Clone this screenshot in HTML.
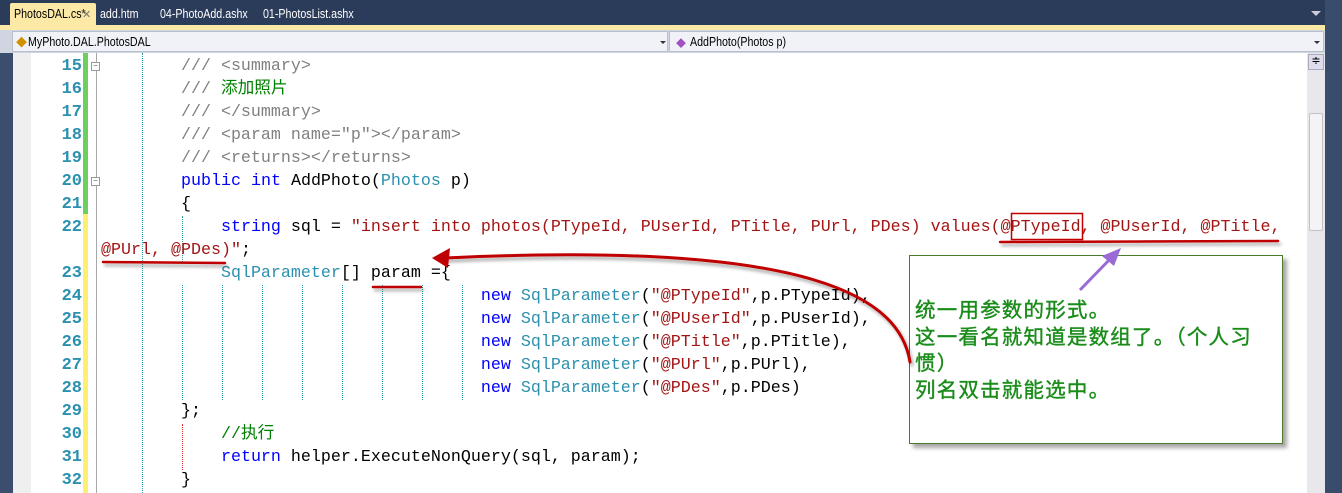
<!DOCTYPE html>
<html><head><meta charset="utf-8">
<style>
*{margin:0;padding:0;box-sizing:border-box}
body{width:1342px;height:493px;overflow:hidden;background:#fff;position:relative;font-family:"Liberation Sans","Noto Sans CJK SC",sans-serif}
.abs{position:absolute}
.tab{position:absolute;top:6px;font-size:13px;color:#fff;transform:scaleX(0.82);transform-origin:0 0;white-space:nowrap}
.nav{position:absolute;top:34px;font-size:13px;transform:scaleX(0.82);transform-origin:0 0;white-space:nowrap}
.code{position:absolute;left:101px;font-family:"Liberation Mono","Noto Sans CJK SC",monospace;font-size:16.67px;line-height:23px;height:23px;white-space:pre;color:#000}
.ln{position:absolute;left:31px;width:51px;text-align:right;font-family:"Liberation Mono",monospace;font-weight:bold;font-size:17px;line-height:23px;color:#2b91af}
.c{color:#808080}.g{color:#008000}.k{color:#0000ff}.t{color:#2b91af}.s{color:#a31515}
.dot{position:absolute;width:0;border-left:1px dotted #2a9a9a}
.note{position:absolute;left:915px;font-family:"WenQuanYi Zen Hei","Noto Sans CJK SC",sans-serif;font-size:20.5px;letter-spacing:1.2px;color:#1a8c1a;font-weight:normal;-webkit-text-stroke:0.4px #1a8c1a;line-height:26px;white-space:pre}
</style></head><body>
<div class="abs" style="left:0;top:0;width:1342px;height:30px;background:#2b3b5a"></div>
<div class="abs" style="left:10px;top:3px;width:86px;height:24px;background:#fce9a6;border-radius:2px 2px 0 0"></div>
<div class="abs" style="left:0;top:25px;width:1325px;height:5px;background:#fce9a6"></div>
<div class="tab" style="left:14px;color:#000">PhotosDAL.cs*</div>
<div class="abs" style="left:82px;top:8px;font-size:11px;color:#777">✕</div>
<div class="tab" style="left:100px">add.htm</div>
<div class="tab" style="left:160px">04-PhotoAdd.ashx</div>
<div class="tab" style="left:263px">01-PhotosList.ashx</div>
<div class="abs" style="left:1311px;top:11px;width:0;height:0;border-left:5px solid transparent;border-right:5px solid transparent;border-top:5px solid #ccd"></div>
<div class="abs" style="left:0;top:30px;width:13px;height:463px;background:#3c4e6e"></div>
<div class="abs" style="left:1325px;top:0;width:17px;height:493px;background:#3a4c6c"></div>
<div class="abs" style="left:0;top:30px;width:1325px;height:23px;background:#cfd6e2"></div>
<div class="abs" style="left:12px;top:31px;width:656px;height:21px;background:#f0f2f7;border:1px solid #b8c0cc"></div>
<div class="abs" style="left:669px;top:31px;width:655px;height:21px;background:#f0f2f7;border:1px solid #b8c0cc"></div>
<div class="abs" style="left:16px;top:34px;font-size:11px;color:#d09000">◆</div>
<div class="nav" style="left:28px">MyPhoto.DAL.PhotosDAL</div>
<div class="abs" style="left:660px;top:41px;border-left:3px solid transparent;border-right:3px solid transparent;border-top:3px solid #333"></div>
<div class="abs" style="left:676px;top:35px;font-size:10px;color:#a050c0">◆</div>
<div class="nav" style="left:690px">AddPhoto(Photos p)</div>
<div class="abs" style="left:1314px;top:41px;border-left:3px solid transparent;border-right:3px solid transparent;border-top:3px solid #333"></div>
<div class="abs" style="left:13px;top:53px;width:18px;height:440px;background:#efefef"></div>
<div class="abs" style="left:83px;top:53px;width:5px;height:161px;background:#6ccf5e"></div>
<div class="abs" style="left:83px;top:214px;width:5px;height:279px;background:#fef06e"></div>
<div class="abs" style="left:96px;top:53px;width:1px;height:440px;background:#a8a8a8"></div>
<div class="abs" style="left:91px;top:62px;width:9px;height:9px;border:1px solid #999;background:#fff;font-size:8px;line-height:6px;text-align:center;color:#555">−</div>
<div class="abs" style="left:91px;top:177px;width:9px;height:9px;border:1px solid #999;background:#fff;font-size:8px;line-height:6px;text-align:center;color:#555">−</div>
<div class="abs" style="left:1307px;top:53px;width:18px;height:440px;background:#e8e8ec"></div>
<div class="abs" style="left:1308px;top:54px;width:16px;height:16px;background:#dde;border:1px solid #aab;font-size:11px;text-align:center;line-height:13px">≑</div>
<div class="abs" style="left:1309px;top:113px;width:14px;height:118px;background:#f4f4f6;border:1px solid #c0c0c8;border-radius:2px"></div>
<div class="dot" style="left:142px;top:53px;height:440px"></div>
<div class="dot" style="left:182px;top:216px;height:46px"></div>
<div class="dot" style="left:182px;top:285px;height:115px"></div>
<div class="dot" style="left:182px;top:424px;height:46px;border-left-color:#e03030"></div>
<div class="dot" style="left:222px;top:285px;height:115px"></div>
<div class="dot" style="left:262px;top:285px;height:115px"></div>
<div class="dot" style="left:302px;top:285px;height:115px"></div>
<div class="dot" style="left:342px;top:285px;height:115px"></div>
<div class="dot" style="left:382px;top:285px;height:115px"></div>
<div class="dot" style="left:422px;top:285px;height:115px"></div>
<div class="dot" style="left:462px;top:285px;height:115px"></div>
<div class="ln" style="top:55px">15</div><div class="ln" style="top:78px">16</div><div class="ln" style="top:101px">17</div><div class="ln" style="top:124px">18</div><div class="ln" style="top:147px">19</div><div class="ln" style="top:170px">20</div><div class="ln" style="top:193px">21</div><div class="ln" style="top:216px">22</div><div class="ln" style="top:262px">23</div><div class="ln" style="top:285px">24</div><div class="ln" style="top:308px">25</div><div class="ln" style="top:331px">26</div><div class="ln" style="top:354px">27</div><div class="ln" style="top:377px">28</div><div class="ln" style="top:400px">29</div><div class="ln" style="top:423px">30</div><div class="ln" style="top:446px">31</div><div class="ln" style="top:469px">32</div>
<div class="code" style="top:55px"><span class="c">        /// &lt;summary&gt;</span></div>
<div class="code" style="top:78px"><span class="c">        /// </span><span class="g">添加照片</span></div>
<div class="code" style="top:101px"><span class="c">        /// &lt;/summary&gt;</span></div>
<div class="code" style="top:124px"><span class="c">        /// &lt;param name="p"&gt;&lt;/param&gt;</span></div>
<div class="code" style="top:147px"><span class="c">        /// &lt;returns&gt;&lt;/returns&gt;</span></div>
<div class="code" style="top:170px">        <span class="k">public</span> <span class="k">int</span> AddPhoto(<span class="t">Photos</span> p)</div>
<div class="code" style="top:193px">        {</div>
<div class="code" style="top:216px">            <span class="k">string</span> sql = <span class="s">"insert into photos(PTypeId, PUserId, PTitle, PUrl, PDes) values(@PTypeId, @PUserId, @PTitle,</span></div>
<div class="code" style="top:239px"><span class="s">@PUrl, @PDes)"</span>;</div>
<div class="code" style="top:262px">            <span class="t">SqlParameter</span>[] param ={</div>
<div class="code" style="top:285px">                                      <span class="k">new</span> <span class="t">SqlParameter</span>(<span class="s">"@PTypeId"</span>,p.PTypeId),</div>
<div class="code" style="top:308px">                                      <span class="k">new</span> <span class="t">SqlParameter</span>(<span class="s">"@PUserId"</span>,p.PUserId),</div>
<div class="code" style="top:331px">                                      <span class="k">new</span> <span class="t">SqlParameter</span>(<span class="s">"@PTitle"</span>,p.PTitle),</div>
<div class="code" style="top:354px">                                      <span class="k">new</span> <span class="t">SqlParameter</span>(<span class="s">"@PUrl"</span>,p.PUrl),</div>
<div class="code" style="top:377px">                                      <span class="k">new</span> <span class="t">SqlParameter</span>(<span class="s">"@PDes"</span>,p.PDes)</div>
<div class="code" style="top:400px">        };</div>
<div class="code" style="top:423px">            <span class="g">//执行</span></div>
<div class="code" style="top:446px">            <span class="k">return</span> helper.ExecuteNonQuery(sql, param);</div>
<div class="code" style="top:469px">        }</div>
<div class="abs" style="left:909px;top:255px;width:374px;height:189px;background:#fff;border:1px solid #4a7a2a;box-shadow:4px 4px 4px rgba(0,0,0,0.35)"></div>
<div class="note" style="top:295px">统一用参数的形式。</div>
<div class="note" style="top:322px">这一看名就知道是数组了。（个人习</div>
<div class="note" style="top:348px">惯）</div>
<div class="note" style="top:375px">列名双击就能选中。</div>
<svg class="abs" style="left:0;top:0" width="1342" height="493">
<defs><filter id="sh"><feDropShadow dx="2" dy="3" stdDeviation="1.5" flood-color="#000" flood-opacity="0.35"/></filter></defs>
<rect x="1011.5" y="213.5" width="71" height="26" fill="none" stroke="#c00000" stroke-width="1.5"/>
<g filter="url(#sh)" stroke="#c00000" stroke-width="2.5" fill="none" stroke-linecap="round">
<path d="M1000 242 L1278 241"/>
<path d="M103 262 L225 263"/>
<path d="M373 287 L421 287"/>
<path d="M910 362 C900 300 820 240 445 258" stroke-width="3"/>
</g>
<polygon points="432,258 450,248 448,268" fill="#c00000"/>
<path d="M1080 290 L1112 257" stroke="#9a6ad6" stroke-width="3" fill="none"/>
<polygon points="1121,248 1102,256 1114,266" fill="#9a6ad6"/>
</svg>
</body></html>
